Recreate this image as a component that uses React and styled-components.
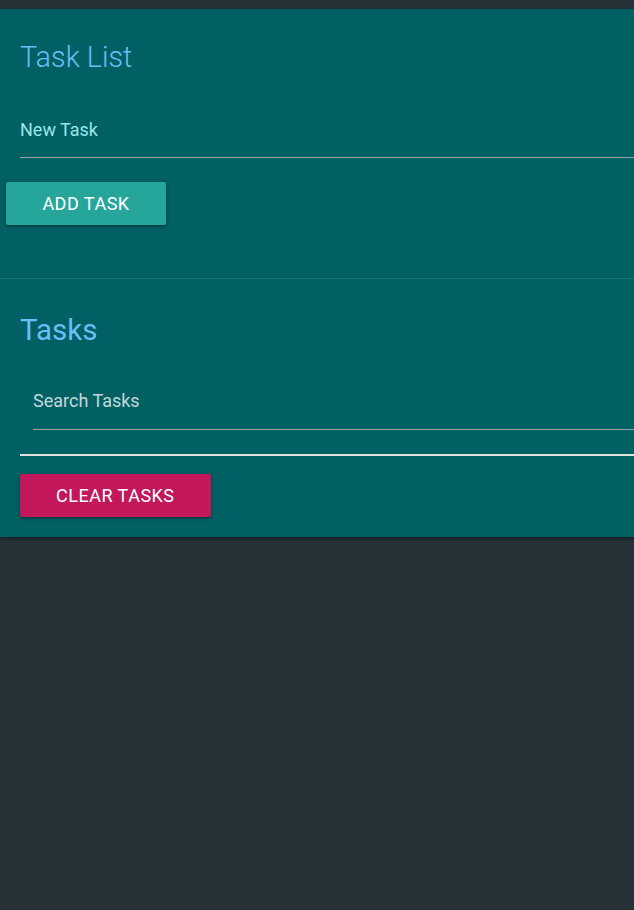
import styled, { createGlobalStyle } from "styled-components";

const GlobalStyle = createGlobalStyle`
  html, body {
    margin: 0;
    padding: 0;
    background: #263238;
    overflow: hidden;
    font-family: Roboto, "Noto Sans", sans-serif;
  }
  #root {
    min-height: 910px;
  }
`;

const Page = styled.div`
  padding-top: 9px;
  overflow: hidden;
  padding-bottom: 20px;
`;

const Card = styled.div`
  width: calc(100% + 40px);
  background: #006064;
  box-shadow: 0 2px 2px 0 rgba(0, 0, 0, 0.14), 0 3px 1px -2px rgba(0, 0, 0, 0.12),
    0 1px 5px 0 rgba(0, 0, 0, 0.2);
`;

const Section = styled.div`
  padding: ${(p) => p.$pad};
  border-top: ${(p) => (p.$divided ? "1px solid rgba(255, 255, 255, 0.1)" : "none")};
`;

const Title = styled.h2`
  margin: 0;
  font-size: ${(p) => (p.$light ? "28.8px" : "29.5px")};
  line-height: 32px;
  font-weight: ${(p) => (p.$light ? 300 : 400)};
  color: #6cbcf6;
`;

const InputField = styled.div`
  margin-top: ${(p) => p.$top};
  margin-left: ${(p) => p.$indent || "0"};
  padding-bottom: ${(p) => p.$bottom};
  border-bottom: 1px solid #9e9e9e;
`;

const Label = styled.label`
  display: block;
  font-size: ${(p) => p.$size};
  line-height: 20px;
  color: ${(p) => p.$color};
`;

const SearchBox = styled.div`
  padding-bottom: 24px;
  border-bottom: 2px solid #e0e0e0;
`;

const Button = styled.button`
  display: block;
  height: 43px;
  margin-top: ${(p) => p.$top};
  margin-left: ${(p) => p.$left || "0"};
  padding: 0 36px;
  border: none;
  border-radius: 2px;
  background: ${(p) => p.$bg};
  color: #fff;
  font-family: Roboto, sans-serif;
  font-size: 18px;
  letter-spacing: 0.5px;
  text-transform: uppercase;
  box-shadow: 0 2px 2px 0 rgba(0, 0, 0, 0.14), 0 3px 1px -2px rgba(0, 0, 0, 0.12),
    0 1px 5px 0 rgba(0, 0, 0, 0.2);
  cursor: pointer;
`;

export default function App() {
  return (
    <>
      <GlobalStyle />
      <Page>
        <Card>
          <Section $pad="32px 0 53px 20px">
            <Title $light>Task List</Title>
            <InputField $top="47px" $bottom="17px">
              <Label $size="18px" $color="#9ae6e8">New Task</Label>
            </InputField>
            <Button $top="24px" $left="-14px" $bg="#26a69a" style={{ width: 160 }}>
              Add Task
            </Button>
          </Section>
          <Section $divided $pad="35px 0 20px 20px">
            <Title>Tasks</Title>
            <SearchBox>
              <InputField $top="45px" $bottom="18px" $indent="13px">
                <Label $size="18px" $color="#c4d8d8">Search Tasks</Label>
              </InputField>
            </SearchBox>
            <Button $top="18px" $bg="#c2185b">
              Clear Tasks
            </Button>
          </Section>
        </Card>
      </Page>
    </>
  );
}
